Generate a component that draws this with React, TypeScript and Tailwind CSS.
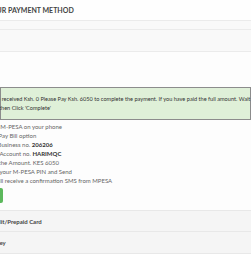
export default function App() {
  const steps = [
    { text: 'Go to M-PESA on your phone', shift: '-ml-[16px]' },
    { text: 'Select Pay Bill option', shift: '-ml-[19px]' },
    { text: 'Enter Business no. ', bold: '206206', shift: '-ml-[18px]' },
    { text: 'Enter Account no. ', bold: 'HARIMQC', shift: '-ml-[16px]' },
    { text: 'Enter the Amount. KES 6050', shift: '-ml-[17px]' },
    { text: 'Enter your M-PESA PIN and Send', shift: '-ml-[16px]' },
    { text: 'You will receive a confirmation SMS from MPESA', shift: '-ml-[17px]' },
  ]

  return (
    <div className="w-[251px] h-[255px] overflow-hidden bg-white font-['Lato',sans-serif]">
      {/* Header */}
      <div className="h-[21px] flex items-center border-b border-[#ebebeb] bg-[#fefefe]">
        <h2 className="-ml-[44px] whitespace-nowrap text-[7px] font-bold text-[#444]">
          CHOOSE YOUR PAYMENT METHOD
        </h2>
      </div>

      <div className="h-[8px] bg-[#f9f9f9]" />

      {/* Payment options */}
      <div className="border-t border-[#ebebeb]">
        <div className="h-[22px] bg-[#f9f9f9] border-b border-[#ebebeb]" />

        <div className="bg-[#fdfdfd] pt-[35px] pb-[7px]">
          <div className="border border-[#8c8c8c] bg-[#dff0d8] pt-[6px] pb-[7px] text-[5.6px] leading-[9px] text-[#333]">
            <p className="-ml-[23px] whitespace-nowrap">
              You have received Ksh. 0 Please Pay Ksh. 6050 to complete the payment. If you have paid the full amount. Wait a few minutes
            </p>
            <p className="-ml-[2px] whitespace-nowrap">then Click 'Complete'</p>
          </div>

          <ol className="mt-[2px] text-[6px] leading-[9px] text-[#666]">
            {steps.map((s) => (
              <li key={s.text} className={`${s.shift} whitespace-nowrap`}>
                {s.text}
                {s.bold && <b className="text-[#333]">{s.bold}</b>}
              </li>
            ))}
          </ol>

          <button className="block mt-[3px] -ml-[40px] h-[15px] w-[43px] rounded-[2px] bg-[#5cb85c] text-[6px] text-white">
            Complete
          </button>
        </div>

        <div className="h-[22px] flex items-center bg-[#f5f5f5] border-t border-b border-[#e8e8e8]">
          <span className="-ml-[12px] whitespace-nowrap text-[6px] font-bold text-[#444]">Credit/Prepaid Card</span>
        </div>
        <div className="h-[22px] flex items-center bg-[#f5f5f5] border-b border-[#e8e8e8]">
          <span className="-ml-[13px] whitespace-nowrap text-[6px] font-bold text-[#444]">Money</span>
        </div>
      </div>
    </div>
  )
}
